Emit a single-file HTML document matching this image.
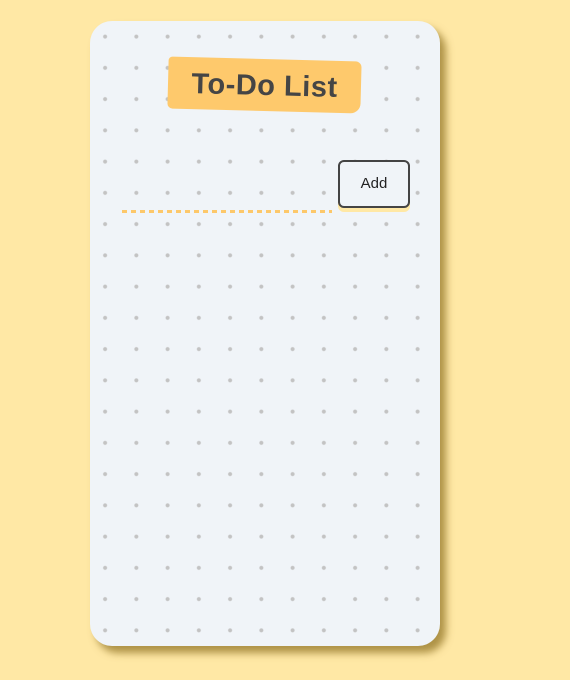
<!DOCTYPE html>
<html><head><style>
html,body{margin:0;padding:0;}
body{width:570px;height:680px;background:#ffe8a5;position:relative;overflow:hidden;font-family:"Comic Sans MS","Liberation Sans",sans-serif;}
.card{position:absolute;left:90px;top:21px;width:350px;height:625px;border-radius:22px;background-color:#f0f4f8;
background-image:radial-gradient(circle at 15.6px 15.6px,#c3c3c3 1.7px,transparent 2.3px);
background-size:31.25px 31.25px;background-position:-0.5px 0px;
box-shadow:6px 7px 8px rgba(140,110,30,0.7);}
.title{position:absolute;left:168px;top:59px;width:193px;height:52px;background:#fec96c;border-radius:4px 6px 10px 5px;transform:rotate(1.5deg);}
.tt{position:absolute;left:168px;top:70px;width:193px;text-align:center;font-size:29px;font-weight:bold;color:#454545;letter-spacing:0.5px;transform:rotate(1.5deg);}
.btn{position:absolute;left:338px;top:160px;width:68px;height:44px;border:2px solid #444;border-radius:6px;background:#f0f4f8;box-shadow:0 4px 0 #ffe8a5;font-size:15px;color:#222;text-align:center;line-height:44px;}
.line{position:absolute;left:122px;top:210px;width:210px;height:3px;background:repeating-linear-gradient(90deg,#fdc86a 0 5px,transparent 5px 9px);}
</style></head><body>
<div class="card"></div>
<div class="title"></div>
<div class="tt">To-Do List</div>
<div class="btn">Add</div>
<div class="line"></div>
</body></html>
